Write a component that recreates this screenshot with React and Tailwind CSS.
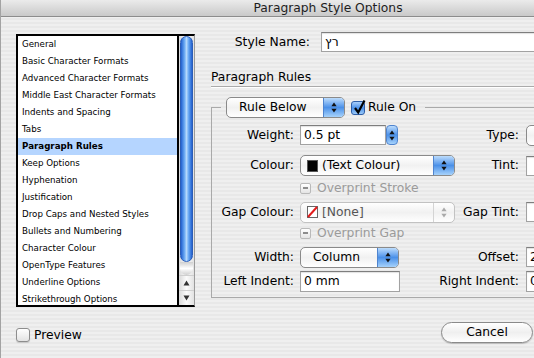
import React from "react";

const items = [
  "General",
  "Basic Character Formats",
  "Advanced Character Formats",
  "Middle East Character Formats",
  "Indents and Spacing",
  "Tabs",
  "Paragraph Rules",
  "Keep Options",
  "Hyphenation",
  "Justification",
  "Drop Caps and Nested Styles",
  "Bullets and Numbering",
  "Character Colour",
  "OpenType Features",
  "Underline Options",
  "Strikethrough Options",
];

function Arrows({ color = "#111" }) {
  return (
    <svg width="6" height="11" viewBox="0 0 6 11">
      <path d="M3 0.5 L5.6 4.2 H0.4 Z" fill={color} />
      <path d="M3 10.5 L5.6 6.8 H0.4 Z" fill={color} />
    </svg>
  );
}

function BlueCap() {
  return (
    <div className="flex w-[21px] items-center justify-center border-l border-[#4f84cf] bg-gradient-to-b from-[#bcdcfc] via-[#4a90e8] to-[#a6d2fb]">
      <Arrows />
    </div>
  );
}

function Popup({ className, children, disabled, pad = "pl-[6px]" }) {
  return (
    <div
      className={`flex items-stretch overflow-hidden rounded-[5px] border ${
        disabled ? "border-[#c2c2c2]" : "border-[#8a8a8a]"
      } bg-gradient-to-b from-white via-[#f1f1f1] to-white ${className}`}
    >
      <div className={`flex flex-1 items-center gap-[4px] ${pad}`}>{children}</div>
      {disabled ? (
        <div className="flex w-[21px] items-center justify-center border-l border-[#d4d4d4]">
          <Arrows color="#a9a9a9" />
        </div>
      ) : (
        <BlueCap />
      )}
    </div>
  );
}

function TextBox({ className, children }) {
  return (
    <div
      className={`flex items-center border border-[#a2a2a2] border-t-[#7e7e7e] bg-white pl-[3px] shadow-[inset_0_1px_1px_rgba(0,0,0,0.12)] ${className}`}
    >
      {children}
    </div>
  );
}

function Mixed() {
  return (
    <div className="flex h-[11px] w-[11px] items-center justify-center rounded-[2px] border border-[#b9b9b9] bg-gradient-to-b from-white to-[#e4e4e4]">
      <div className="h-[2px] w-[5px] bg-[#8c8c8c]" />
    </div>
  );
}

function Row({ label, h, mt, children, right, rightControl }) {
  return (
    <div className={`flex items-center ${h} ${mt}`}>
      <span className="w-[82px] text-right">{label}</span>
      <div className="ml-[6px] flex w-[219px] items-center justify-between">
        {children}
        {right && <span>{right}</span>}
      </div>
      {rightControl && <div className="ml-[7px]">{rightControl}</div>}
    </div>
  );
}

export default function App() {
  return (
    <div className="h-[358px] w-[534px] overflow-hidden font-['DejaVu_Sans',sans-serif] text-[12.3px] text-black">
      <div className="h-[358px] w-[655px] border-l border-[#a3a3a3] bg-[repeating-linear-gradient(180deg,#efefef_0px,#efefef_2px,#e8e8e8_2px,#e8e8e8_4px)]">
        <div className="flex h-[17px] items-center justify-center border-b border-[#8c8c8c] bg-gradient-to-b from-[#ebebeb] to-[#c9c9c9] text-[#1e1e1e]">
          Paragraph Style Options
        </div>

        <div className="flex">
          {/* category list */}
          <div className="pl-[15px] pt-[17px]">
            <div className="flex h-[273px] w-[179px] border-y-2 border-l-2 border-r border-black border-r-[#9a9a9a] bg-white">
              <div className="flex-1 overflow-hidden border-r-2 border-black">
                {items.map((it) => (
                  <div
                    key={it}
                    className={`h-[17px] pl-[4px] text-[8.7px] leading-[17px] ${
                      it === "Paragraph Rules" ? "bg-[#b5d5ff] font-bold" : ""
                    }`}
                  >
                    {it}
                  </div>
                ))}
              </div>
              <div className="flex w-[15px] flex-col bg-gradient-to-r from-[#dadada] via-[#fbfbfb] to-[#e2e2e2]">
                <div className="mx-auto h-[226px] w-[13px] rounded-full border border-[#2b5db8] bg-[linear-gradient(90deg,#2361cf_0%,#66a6f2_30%,#b4d8fc_50%,#66a6f2_70%,#2361cf_100%)]" />
                <div className="mx-auto h-[13px] w-[13px] rounded-b-full bg-gradient-to-b from-[#d0d0d0] via-white to-[#cfcfcf]" />
                <div className="flex h-[15px] items-center justify-center border-t border-[#cfcfcf]">
                  <svg width="7" height="6" viewBox="0 0 7 6">
                    <path d="M3.5 0.5 L6.5 5.5 H0.5 Z" fill="#333" />
                  </svg>
                </div>
                <div className="flex h-[15px] items-center justify-center border-t border-[#cfcfcf]">
                  <svg width="7" height="6" viewBox="0 0 7 6">
                    <path d="M3.5 5.5 L6.5 0.5 H0.5 Z" fill="#333" />
                  </svg>
                </div>
              </div>
            </div>

            <div className="mt-[19px] flex items-center gap-[4px]">
              <div className="h-[14px] w-[14px] rounded-[3px] border border-[#8d8d8d] bg-gradient-to-b from-white to-[#e3e3e3] shadow-[0_1px_1px_rgba(0,0,0,0.15)]" />
              <span>Preview</span>
            </div>
          </div>

          {/* settings */}
          <div className="ml-[16px] w-[440px] pt-[15px]">
            <div className="flex h-[20px] items-center">
              <span className="w-[99px] text-right">Style Name:</span>
              <TextBox className="ml-[11px] h-[20px] flex-1">רץ</TextBox>
            </div>

            <div className="mt-[18px] h-[15px] leading-[15px]">Paragraph Rules</div>
            <div className="mt-[1px] h-[1px] bg-[#aaaaaa] shadow-[0_1px_0_#ffffff]" />

            <fieldset className="mt-[10px] w-[430px] border border-[#a9a9a9] pb-[5px]">
              <legend className="ml-[9px] px-[5px]">
                <div className="flex items-center pr-[4px]">
                  <Popup className="h-[21px] w-[119px]" pad="pl-[12px]">
                    Rule Below
                  </Popup>
                  <div className="relative ml-[6px] h-[14px] w-[14px] rounded-[3px] border border-[#2d5ea8] bg-gradient-to-b from-[#a9d0fb] via-[#4a90e8] to-[#9ccaf8]">
                    <svg className="absolute -top-[3px] left-[1px]" width="13" height="16" viewBox="0 0 13 16">
                      <path d="M2 9 L5.2 13.5 L11.5 1.5" fill="none" stroke="#000" strokeWidth="2.2" />
                    </svg>
                  </div>
                  <span className="ml-[3px]">Rule On</span>
                </div>
              </legend>

              <Row
                label="Weight:"
                h="h-[20px]"
                mt="mt-[7px]"
                right="Type:"
                rightControl={<Popup className="h-[21px] w-[80px]" />}
              >
                <div className="flex h-[20px] items-center">
                  <TextBox className="h-[20px] w-[86px]">0.5 pt</TextBox>
                  <div className="flex h-[20px] w-[12px] items-center justify-center rounded-[4px] border border-[#4f84cf] bg-gradient-to-b from-[#bcdcfc] via-[#4a90e8] to-[#a6d2fb]">
                    <Arrows />
                  </div>
                </div>
              </Row>

              <Row
                label="Colour:"
                h="h-[21px]"
                mt="mt-[10px]"
                right="Tint:"
                rightControl={<TextBox className="h-[20px] w-[60px]" />}
              >
                <Popup className="h-[21px] w-[155px]">
                  <div className="h-[12px] w-[11px] border border-[#555] bg-black" />
                  <span>(Text Colour)</span>
                </Popup>
              </Row>

              <Row label="" h="h-[12px]" mt="mt-[6px]">
                <div className="flex items-center gap-[6px] text-[#9b9b9b]">
                  <Mixed />
                  <span>Overprint Stroke</span>
                </div>
              </Row>

              <Row
                label="Gap Colour:"
                h="h-[20px]"
                mt="mt-[8px]"
                right="Gap Tint:"
                rightControl={<TextBox className="h-[20px] w-[60px]" />}
              >
                <Popup className="h-[21px] w-[155px] text-[#555]" disabled>
                  <svg width="11" height="12" viewBox="0 0 11 12">
                    <rect x="0.5" y="0.5" width="10" height="11" fill="#fff" stroke="#666" />
                    <path d="M1 11 L10 1" stroke="#e21b1b" strokeWidth="2" />
                  </svg>
                  <span>[None]</span>
                </Popup>
              </Row>

              <Row label="" h="h-[12px]" mt="mt-[5px]">
                <div className="flex items-center gap-[6px] text-[#9b9b9b]">
                  <Mixed />
                  <span>Overprint Gap</span>
                </div>
              </Row>

              <Row
                label="Width:"
                h="h-[20px]"
                mt="mt-[8px]"
                right="Offset:"
                rightControl={<TextBox className="h-[20px] w-[60px]">2</TextBox>}
              >
                <Popup className="h-[21px] w-[99px]" pad="pl-[12px]">
                  Column
                </Popup>
              </Row>

              <Row
                label="Left Indent:"
                h="h-[21px]"
                mt="mt-[4px]"
                right="Right Indent:"
                rightControl={<TextBox className="h-[21px] w-[60px]">0</TextBox>}
              >
                <TextBox className="h-[21px] w-[100px]">0 mm</TextBox>
              </Row>
            </fieldset>

            <div className="ml-[230px] mt-[24px] flex h-[21px] w-[92px] items-center justify-center rounded-full border border-[#8a8a8a] bg-gradient-to-b from-white via-[#efefef] to-white shadow-[0_1px_1px_rgba(0,0,0,0.2)]">
              Cancel
            </div>
          </div>
        </div>
      </div>
    </div>
  );
}
